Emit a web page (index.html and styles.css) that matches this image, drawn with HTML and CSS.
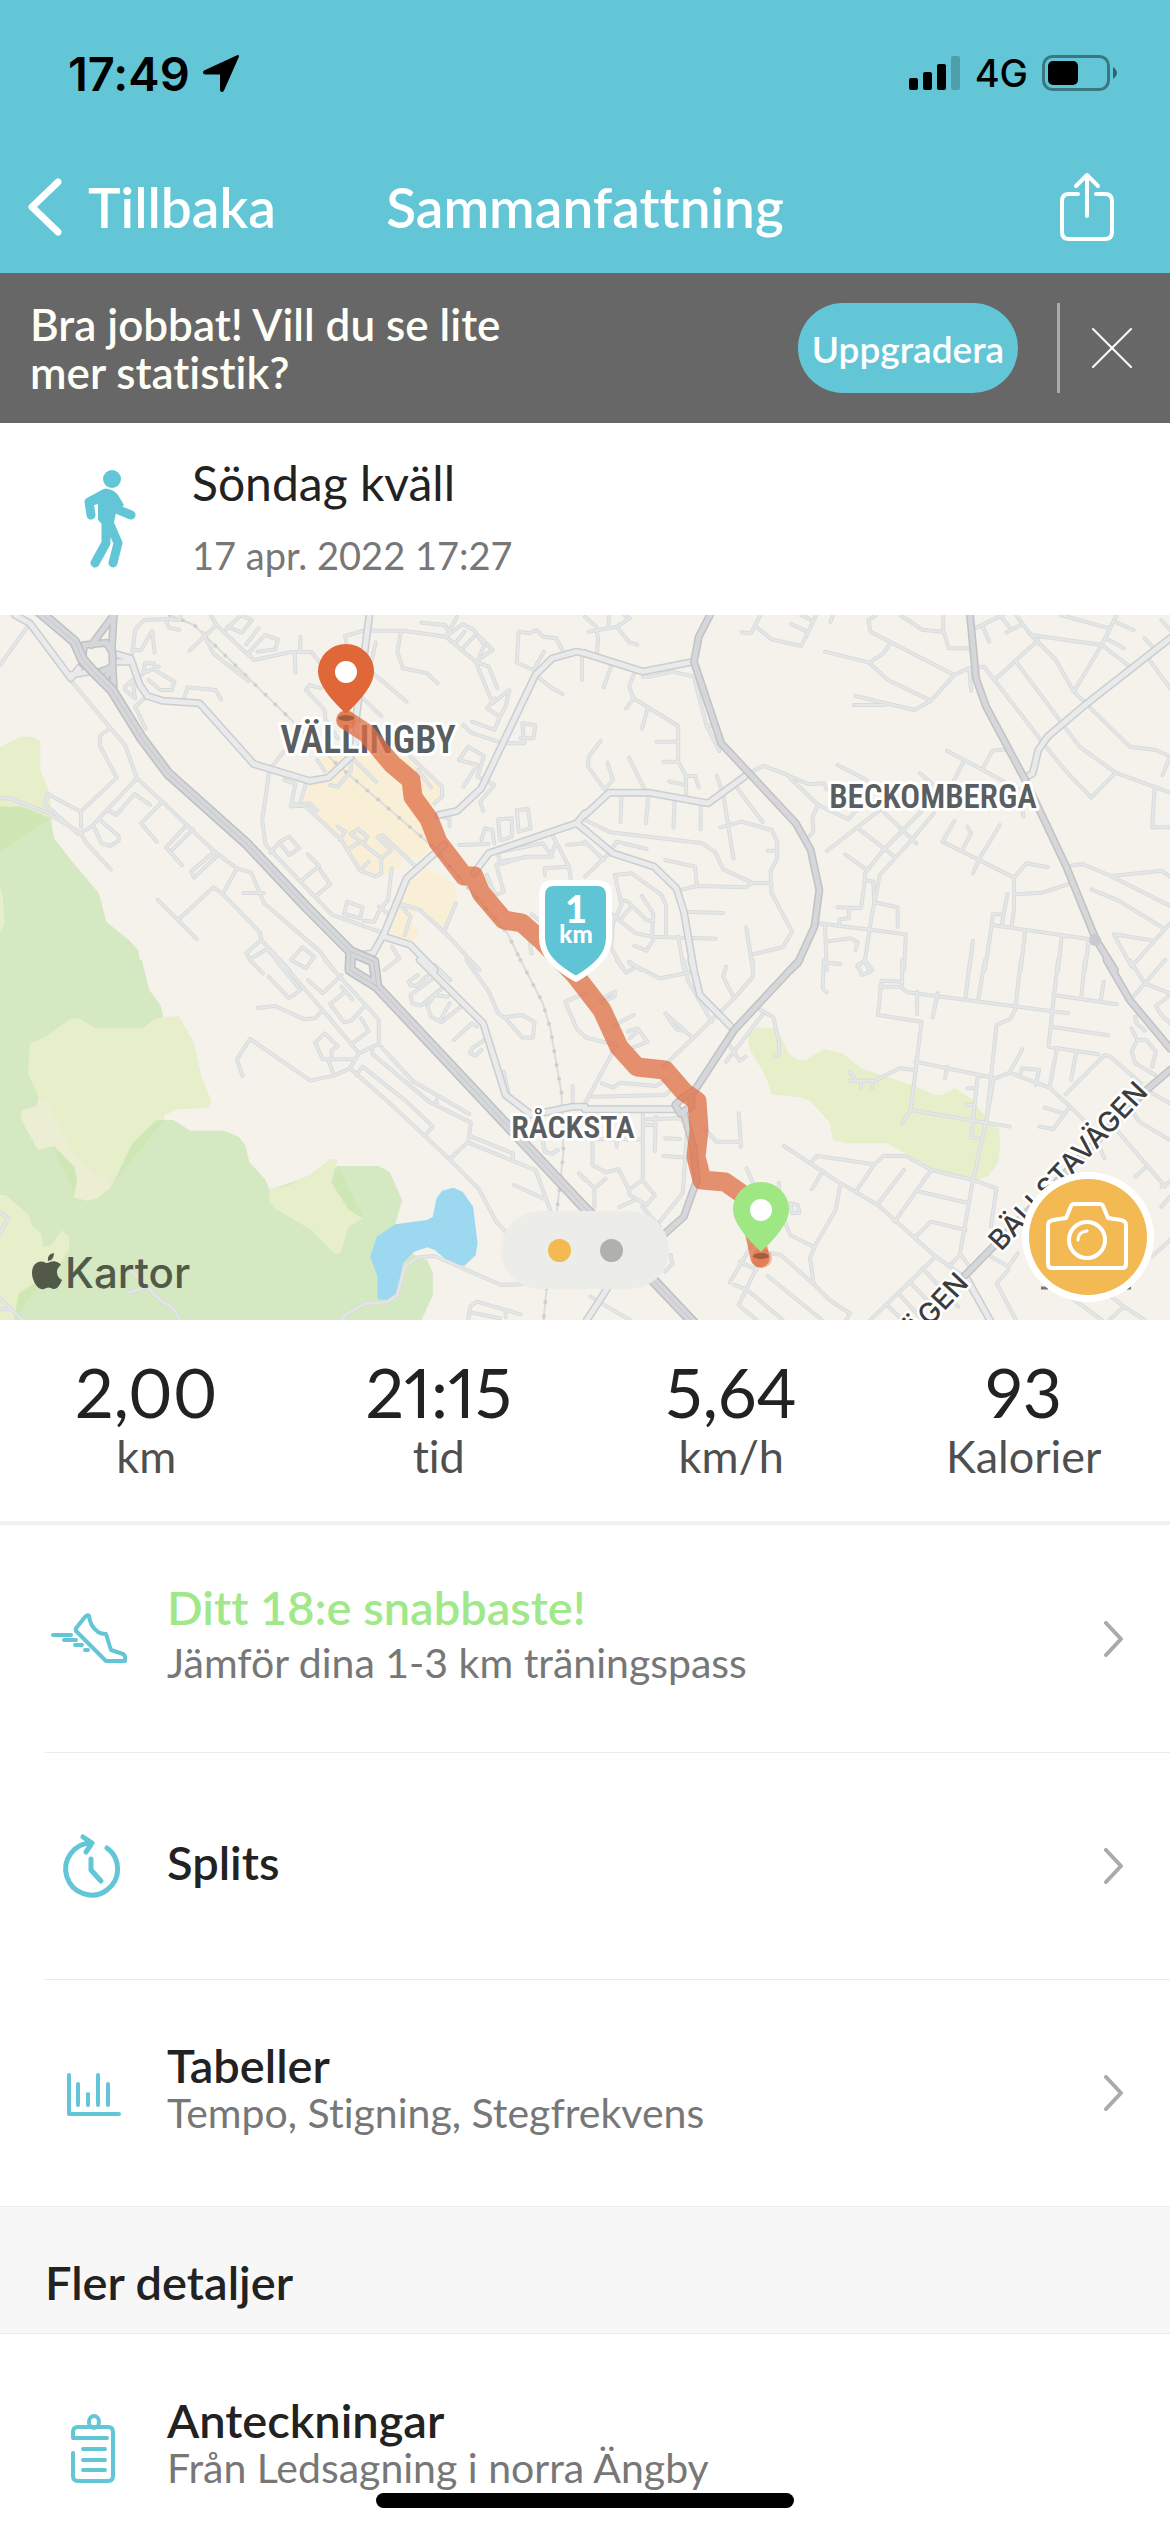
FILE: index.html
```html
<!DOCTYPE html>
<html lang="sv">
<head>
<meta charset="utf-8">
<meta name="viewport" content="width=device-width, initial-scale=1">
<title>Sammanfattning</title>
<link rel="stylesheet" href="styles.css">
</head>
<body>
<div class="screen">
  <header class="top">
    <div class="status">
      <div class="status-side">
        <span class="time">17:49</span>
        <svg width="38" height="38" viewBox="0 0 38 38" aria-hidden="true"><path d="M34.500 1.500Q38 0 36.500 3.800L22 36.500Q20 39.500 18 36.500V20.500H3Q-.5 19 2 16.500Z"/></svg>
      </div>
      <div class="status-side">
        <svg width="52" height="36" viewBox="0 0 52 36" aria-hidden="true"><rect y="23" width="9" height="12" rx="2"/><rect x="14" y="17" width="9" height="18" rx="2"/><rect x="28" y="9" width="9" height="26" rx="2"/><rect x="42" y="1" width="9" height="34" rx="2" opacity=".2"/></svg>
        <span class="network">4G</span>
        <svg width="76" height="36" viewBox="0 0 76 36" aria-hidden="true"><rect x="1.500" y="1.500" width="65" height="33" rx="9" fill="none" stroke="#000" stroke-opacity=".4" stroke-width="3"/><rect x="6" y="6" width="30" height="24" rx="5"/><path d="M71 12q8 6 0 12z" opacity=".5"/></svg>
      </div>
    </div>
    <nav class="nav">
      <a class="back" href="#">
        <svg width="34" height="58" viewBox="0 0 34 58" aria-hidden="true"><path d="M30 4L4 29L30 54" fill="none" stroke="#fff" stroke-width="7" stroke-linecap="round" stroke-linejoin="round"/></svg>
        <span>Tillbaka</span>
      </a>
      <h1>Sammanfattning</h1>
      <button class="icon-btn share" type="button" aria-label="Dela">
        <svg width="54" height="70" viewBox="0 0 54 70"><path d="M18 22H9Q2 22 2 29V60Q2 67 9 67H45Q52 67 52 60V29Q52 22 45 22H36M27 44V3M16 14L27 3L38 14" fill="none" stroke="#fff" stroke-width="4" stroke-linecap="round" stroke-linejoin="round"/></svg>
      </button>
    </nav>
  </header>

  <aside class="banner">
    <p>Bra jobbat! Vill du se lite<br>mer statistik?</p>
    <button class="upgrade" type="button">Uppgradera</button>
    <span class="divider"></span>
    <button class="icon-btn" type="button" aria-label="Stäng">
      <svg width="40" height="40" viewBox="0 0 40 40"><path d="M1 1L39 39M39 1L1 39" stroke="#fff" stroke-width="2" stroke-linecap="round"/></svg>
    </button>
  </aside>

  <section class="activity">
    <svg width="54" height="100" viewBox="84 469 54 100" aria-hidden="true"><g fill="none" stroke="#63c6d6" stroke-linecap="round" stroke-linejoin="round"><path d="M91 515L89 502L106 493L114 508L131 515" stroke-width="9"/><path d="M106 520V543L95 563M108 520L118 543L113 563" stroke-width="9"/></g><path d="M88 498L102 490Q112 487 118 495L124 505L116 513L114 522L104 526L98 520V504L91 506Z" fill="#63c6d6"/><circle cx="112" cy="479" r="9" fill="#63c6d6"/></svg>
    <div>
      <h2>Söndag kväll</h2>
      <p>17 apr. 2022 17:27</p>
    </div>
  </section>

  <section class="map" aria-label="Karta">
    <svg class="map-art" viewBox="0 615 1170 705" preserveAspectRatio="xMidYMid slice">
      <defs>
        <g id="minor">
          <path transform="translate(0 610) scale(.3731 .3333)" d="M80 40L0 165M193 215L296 354L268 377V408L313 503L217 605L128 552L120 583L210 672L243 652L367 505L335 405L296 354M0 565H25L120 605L215 668L232 700L297 778M217 605V650M367 505L435 575L575 725L635 775L673 788L708 880L855 1022L895 1080M402 585L360 552L312 615L290 600M250 645L272 700L296 708L318 692V678L265 627M435 575L378 640L420 695M497 650L445 712L488 766M517 658L463 718M575 725L512 785L520 803L580 740M635 775L597 852L572 832L477 930M423 870L527 987M597 852L697 968L700 990L660 1030L670 1048L715 1018L770 1080M700 990L775 1080M652 849H706M355 120H378L408 62L414 128M355 130L362 60L385 30L445 27L480 30L485 15M445 27L452 52L480 60M385 185L388 160H412L418 182L468 215L460 240H430L398 210M385 185H395L425 170M335 230L355 210L362 265L335 240ZL385 190M390 355L362 290L388 265M492 270L503 232L578 240L592 268M508 122L580 45L565 15M543 68L572 130L665 213M580 45L680 150L780 126H835L855 155M790 128L792 188M805 80V126M605 60L645 15L675 30L648 68L610 50M693 55L660 103M680 150L665 130L710 75L745 88L738 118L690 125M930 110L925 78L975 62H1080L1195 80L1225 20M1130 38L1193 45L1205 70M1075 62L1065 125L1080 175L1145 190L1173 220M1195 80L1275 155L1320 120L1285 80M1195 80L1240 42L1270 60L1298 105L1285 140M1220 100L1245 65M1240 115L1270 80M1275 155L1320 280L1365 240L1355 290L1340 320L1305 295L1325 265M1275 155L1310 170L1333 235M1265 335L1325 360L1340 320M1242 345L1262 368L1350 400L1405 400L1400 340L1435 345L1430 385L1395 385M1390 65L1385 158L1430 180L1458 125M1390 65L1420 70L1438 60L1455 80L1490 85L1512 130M1435 195L1480 235L1508 252M1560 130V210M1007 97L990 180L1090 275M970 262L1022 318M870 300L873 330L905 385M870 300L820 240L830 225L860 235M760 425L722 480L703 630L712 705L808 818L890 915L1030 970M762 510L792 522L780 590L830 580L850 602M820 520L805 575M782 580L820 590L915 690L965 782L1008 800L1022 790V745L940 672L960 658L985 680L975 700M1022 745L1048 720L1012 682L1025 675L1110 765M905 650L925 665L910 690M930 720L960 700M965 782L988 755M725 728L750 695L775 680L802 715L775 735L750 700M825 733L855 768L805 815M858 780L885 822L845 860M1050 775L1040 870L1015 905L1003 935L975 932M1015 890L1040 910M930 875L972 892L965 925L922 912ZM940 440V485L905 530L885 525M940 440L1008 515M850 450L870 483M1070 880L1100 920L1085 975M1070 880L1125 900L1190 965L1222 880M1190 965L1285 1080M1100 440L1185 530V560L1165 580M1120 480L1155 532M1230 705L1310 702M1290 690L1300 655L1320 660L1325 700M1340 690L1335 628L1372 625V680L1345 690M1390 665L1385 600L1415 597L1422 655L1390 665M1242 530L1280 465L1230 450L1255 410L1297 438L1280 500L1325 525L1287 575L1295 603M1480 675L1492 700L1525 770L1530 810M1345 725L1455 700L1480 740H1420L1340 755L1335 730M1410 740L1330 765L1350 845L1333 853M1490 700L1475 740M1520 705L1568 700M1525 770L1460 775V795M1305 795L1325 850M1180 620L1205 625V648M1425 913L1445 930M1420 1000L1425 1030M780 1050L810 1012L842 1040L820 1075ZM1050 1010L1070 1045L1030 1080"/>
          <path transform="translate(585 610) scale(.3731 .3333)" d="M0 20L30 50L35 85L32 135M10 65L85 50L120 25L105 15M65 15L62 50M85 50L120 98L140 104M70 170L50 232M132 190L118 228L130 265L110 296M130 265L250 348V455L270 498L272 570M168 295L153 356M192 395H250M210 455H250M270 498H295L305 532M226 515L270 525M155 200H175L235 185L292 200L325 345L360 423M325 347H340M42 393L10 440L8 470L52 538L75 510L60 458M118 443L160 540M98 555L95 636M170 555L163 640M240 575L237 653M310 580V658M440 490L477 468L520 485L600 523L640 520L648 538M550 505L625 585L705 628L728 600M625 585L610 620L612 665L595 688M677 465L755 510V540M405 530L476 636M353 497L370 550L398 746M363 652L420 635L500 660L515 695V745L497 785L500 850L555 965L530 1012L450 1033M490 722H515M432 952L450 1080M0 630L68 667L315 700L350 728L370 778L448 818L500 820M448 818L430 832L300 828L250 842M300 828L295 770L215 750M165 717L85 695L65 730L0 800M0 695L50 750M80 795L125 790L205 855L217 885V980M80 795L98 885L75 940L70 1015L105 1080M98 870L115 875L165 930L183 935M152 858L183 910L180 978M70 910L135 970L180 980L350 986M98 925L120 895M132 1008L165 1022L185 985M270 905L370 909M250 980L265 1080M118 1055L150 1080M420 67L445 70L470 15M458 50L500 88L580 108L620 15M553 42L595 65M580 15L610 32M665 15L658 35M780 15L760 30L765 65L990 195L927 272L812 210L762 158L643 125M762 158L800 130L820 98M927 272L883 300L725 258M720 285H805M990 195L1027 175L1070 170L1225 395L1290 485L1357 563L1422 488L1568 548M845 15L905 60L960 65V15M960 60L975 115H1035M1030 175L1035 243M1045 55L1120 15M1065 45L1083 95M1115 20L1138 52M1155 15L1195 75L1385 105L1460 170M1130 67L1168 45M1215 90L1100 207M1155 155L1325 410L1422 488M1195 75L1262 150L1310 245L1385 105L1425 15M1310 245L1460 410L1530 420L1568 440L1548 495M1275 15L1405 55M1420 35L1470 60M1395 85L1445 115M1510 145L1568 235M1500 85L1520 110M1545 30L1568 60M970 422L1165 540L1175 620M1015 455L975 540M1065 478L1092 422L1130 418M898 490L940 530M1527 530L1520 652H1568M648 723L790 600L875 520M790 595L888 700M728 652L830 740M935 610L875 690L790 795L770 910L750 1050L770 1080M697 733L755 780M905 600L800 720L750 790V810L740 895L677 892M750 810L773 815L775 877L838 892V950M707 895V925L682 928V945M625 940L860 973L855 1080M643 945L648 1080M648 995L712 985L730 997L725 1020M650 1058L683 1062M750 1050L730 1070M990 633L958 695L1150 803L1183 760L1240 772M1025 650L1035 670L1010 722M1112 645L1055 750L1040 790M1150 803V900L1143 950M1150 853L1225 848L1297 822M1132 852L1117 945M1120 913H1093L1090 945L1368 990M1090 945L1072 1080M1040 992L1030 1080M1180 960L1168 1080M1278 975L1268 1080M1350 990L1340 1080M1303 767L1333 762L1410 798L1568 888M1410 798L1545 782L1568 800M1357 838L1430 872L1555 958M1568 940L1465 1070L1417 973L1525 992"/>
          <path transform="translate(0 960) scale(.3731 .3333)" d="M670 0L705 40M720 50L775 115L805 90L740 0M750 0L865 150L962 280L1015 252V180L980 135L870 0M825 60L865 100L915 45M915 80L945 118M925 95L885 132L922 187L942 182L980 135M968 175L988 213L945 250M865 150L845 175L815 178L738 138L690 144M962 280L938 325L895 347L832 362L670 237L635 298L650 348M950 298H865L845 248L870 220L905 258L888 272L890 297M880 300L895 347M938 325L1040 425L1205 598L1282 685L1330 785L1360 820M955 345L972 320L1090 425L1160 500L1140 525M1015 252L1105 362L1258 462M998 262V282L1150 425L1262 488L1255 545L1205 598M1170 420V438M1258 528L1375 580V600M1255 548L1435 630L1475 750M1378 675L1465 720M1165 15L1207 60M1250 0L1310 95L1335 160L1350 172L1400 165L1433 187L1428 233H1400L1355 175M1120 45L1095 65L1100 75L1115 78L1145 48M1155 60L1100 105L1105 130L1128 137L1190 80M1200 110L1165 105L1145 135L1155 170L1183 187L1235 140M1180 180L1205 130M1217 240L1265 190L1278 200M1298 240L1265 265L1260 280L1275 287L1290 270M1350 335L1362 395M1535 378V435M1568 100L1515 125L1545 205L1568 230M1455 545L1460 575L1478 582L1495 570M1552 640L1568 660M0 755L22 775L0 820M0 1015L60 1080M0 1048H25M350 930L433 1025L463 1043L483 1080M345 998L395 980M915 1080L925 1065L977 1032L1037 1027L1065 1005L1085 920L1120 892L1165 888L1343 975L1400 972M1255 1080L1260 1040L1278 1025L1395 1063M1265 1058L1340 1075M1355 1055V1072"/>
          <path transform="translate(585 960) scale(.3731 .3333)" d="M85 0L110 38L130 25M118 8L200 55L285 37M265 0L275 60L340 185M378 20L370 50L400 115L450 50V0M80 95V108L45 130M80 95L40 120M290 235L215 160L245 208L260 212M470 150L505 172L520 250V283L510 288M475 165L378 305M390 260L415 303L430 290M130 165L80 195M115 215L140 205L168 245L130 262M145 210L120 235M0 232L85 255L0 430M45 370L75 383L95 368L190 378L215 360M20 410L215 405L225 395M210 320L400 115M640 0L637 85L648 97M645 8L683 12M730 15L750 5L765 35L742 45ZM1032 0L1020 110M1072 0L1053 125M1168 0L1153 150L1138 178L1103 195L1075 490M1268 0L1242 260L1375 283M1340 0L1330 112M1390 65L1382 125M1255 105L1425 133M850 0V85L865 97L1295 160M850 65L795 62L785 165L902 185L873 450L850 490M790 80H850M890 95V162M945 100L932 172M1248 200L1403 226M885 305L1100 355L1138 338L1245 383L1300 440L1355 500L1392 595M970 320L965 355M1138 338L1172 268M1165 345L1172 325L1217 330L1208 375M885 330L843 325L778 362H710M710 335L725 360M740 362V383M770 362V383M873 450L1138 500M1053 345L1035 533H1053M1025 385H1045M1023 435H1040M1095 360L1075 485L1040 660L1005 880L1030 920M1265 265L1245 383M1317 272L1303 360M1288 403L1392 285L1408 290L1490 370M1232 443L1282 460M1300 440L1255 507L1218 500M1465 205L1480 240H1505L1530 275L1520 320M1480 240L1465 275L1475 310L1528 345M1460 0L1500 70L1568 100M1555 0L1465 115M1568 105L1530 138L1545 165L1568 190M1475 170L1478 190L1500 212M1505 390L1568 430M1460 440L1485 485L1568 540M1425 510L1555 680M1475 650L1500 625M1545 680L1568 665M533 558L685 670L785 735L940 890L1010 945M608 605L622 588L775 613L725 697M775 613L800 588H860L928 630L1040 660L1103 685L1088 800M638 632L608 688M855 630L783 735M928 630L830 785M890 693L1030 730M885 832L927 785L1020 810M433 625L450 670M685 670L672 750L615 860L603 895L613 970M520 668V740L550 825L615 862M550 730L570 735L575 758L555 760ZM500 880L525 885L615 975L655 1020L710 1060L700 1080M490 948L635 1080M400 975L435 990L530 1080M470 900L412 1035L460 1080M450 850L388 968M415 905L460 930M412 460L418 560M418 545H352L320 505M155 455V660M190 470L187 573M155 495H190M165 478L250 475L275 490L262 700L200 785M215 535L255 537M210 588L260 592M85 535V560M20 545V615L55 637L90 628L118 690M20 538H150M0 655L25 685V740M25 685L55 657M153 660L187 705L165 735L120 705L118 690ZM92 742L130 722M153 740L200 800M215 935L235 910L230 885M15 1010L120 1080M940 890L765 1080M905 925L1000 1040M870 965L950 1060M840 1000L905 1080M810 1035L850 1080M975 920L1005 885M1088 890L1135 920L1160 880M1135 930L1103 970L1155 1080M1300 1010L1385 1080M1410 1010L1445 1040L1405 1080M1445 1040L1500 1080M1520 890L1568 840M1545 740L1568 710"/>
        </g>
        <g id="medium">
          <path transform="translate(0 610) scale(.3731 .3333)" d="M40 15L80 40L190 205L215 170M190 195L240 185M305 130L350 145L375 225L395 258L435 272L535 280L680 462L830 513L880 503L940 440L955 395V320L990 15M310 155H350M1175 615L1225 603L1290 535L1435 195L1480 145L1545 125L1568 130M1270 790L1310 730L1545 640L1568 610M1545 640L1568 660M1190 705L1090 805L1030 970L1000 1030L960 1035M1030 980L1100 1005L1165 1080"/>
          <path transform="translate(585 610) scale(.3731 .3333)" d="M0 130L155 185L292 155M0 615L65 548H170L330 580L440 490M0 660L75 730L185 770L245 835L265 905L292 1080M1568 85L1340 285L1240 380L1215 420L1200 490L1185 500"/>
          <path transform="translate(0 960) scale(.3731 .3333)" d="M1125 0L1295 190L1355 405L1425 465L1535 440H1568"/>
          <path transform="translate(585 960) scale(.3731 .3333)" d="M0 448H240M285 0L308 105L400 210M1018 945L1085 1080M5 1080L60 985"/>
        </g>
        <g id="major">
          <path transform="translate(585 610) scale(.3731 .3333)" d="M335 15L305 80L292 155L365 400L440 490L565 640L605 720L628 840L615 950L570 1060L550 1080M1032 15L1048 205L1075 290L1180 510L1290 770L1370 990L1420 1080"/>
          <path transform="translate(585 960) scale(.3731 .3333)" d="M575 0L400 210L295 390L265 410L242 435L255 460L285 440L285 410M265 460L290 560L300 660L265 770L215 820M1398 0L1460 120L1568 265M1568 330L1505 390L1020 945M180 950L260 1050"/>
          <path transform="translate(0 610) scale(.3731 .3333)" d="M305 15L300 110L305 240M305 15L245 105M225 105L285 98L302 130V170L260 190L220 160ZM295 175L255 190M300 180L275 210"/>
        </g>
        <g id="motorway">
          <path transform="translate(0 610) scale(.3731 .3333)" d="M100 0L200 95L222 150L250 185L300 240L380 385L450 490L660 700L820 890L940 1025L938 1080L1010 1130L1002 1055L940 1025"/>
          <path transform="translate(0 960) scale(.3731 .3333)" d="M1000 68L1568 745L1620 800L1750 960L1860 1090"/>
        </g>
        <g id="rail">
          <path transform="translate(0 610) scale(.3731 .3333)" d="M455 15L520 45L900 460L1160 710L1360 970L1395 1050"/>
          <path transform="translate(0 960) scale(.3731 .3333)" d="M1395 0L1455 130L1475 205L1505 400L1510 580L1493 750M1465 985L1457 1080"/>
        </g>
      </defs>
      <rect y="610" width="1170" height="715" fill="#f4f2eb"/>
      <g transform="translate(0 610) scale(.3731 .3333)">
        <path fill="#e6eeca" d="M0 412L55 380H85L108 395V480L133 550L140 640H0Z"/>
        <path fill="#d4e8c1" d="M0 590H60L135 625L145 685L190 750L265 850L285 935L345 990L370 1020L380 1080H0Z"/>
        <path fill="#cfe6b5" d="M0 590H60L135 625L0 725Z"/>
        <path fill="#e6eeca" d="M0 830L8 860L12 940L0 970Z"/>
        <path fill="#f9efd7" d="M845 450L900 430L940 385L1100 440L1180 520V565L1160 600L1170 700L1130 745L1075 740V775L1000 800L960 770L905 680L810 580L830 520L880 505ZM1130 765L1215 820L1225 860L1195 960L1120 900L1100 935L1125 970L1105 995L1045 975L1085 840Z"/>
      </g>
      <g transform="translate(0 960) scale(.3731 .3333)">
        <path fill="#d4e8c1" d="M0 0H380L400 90L430 135L438 170L300 300L440 480H465L510 512H600L640 530L657 555L668 605L712 660L722 690L905 618H1015L1045 637L1078 720L1060 790L1100 880L1145 900L1160 940V1005L1130 1080H0Z"/>
        <path fill="#cfe6b5" d="M905 618L975 775L935 750L887 680ZM440 480L310 660L355 550L415 485ZM140 555L200 700L207 662L200 620ZM38 1080L150 900L50 1000Z"/>
        <path fill="#e6eeca" d="M80 250L120 232L190 175H210L255 203H385L415 175L480 168L520 250L540 350L567 425L555 445L480 447L440 465V480H420L355 550L298 680L262 715L235 722L198 712L207 662L200 620L145 558L102 570L55 475L60 450L100 438L103 410L75 340ZM722 685L765 680L832 643L885 597H905L887 665L935 750L972 775L935 800L912 880H895L832 808L735 745L722 725ZM0 705L15 705L78 765L85 795L110 820L117 862L135 858L165 810L185 830V870L150 930L50 1000L38 1080H0Z"/>
        <path fill="#ebeed3" d="M103 415H120L190 570L260 650L295 655V685L262 715L235 722L198 712L207 662L200 620L145 558L102 570L55 475L60 450L100 438Z"/>
        <path fill="#9cd8f0" d="M1215 683L1185 692L1170 715L1160 770L1145 780L1060 793L1010 830L992 890L1012 950V1018L1040 1020L1065 1005L1080 910L1110 875L1145 862L1165 870L1210 912L1245 917L1275 885L1280 850L1268 740L1240 695Z"/>
      </g>
      <path transform="translate(585 960) scale(.3731 .3333)" fill="#e6eeca" d="M437 225L460 203L515 205L545 280L570 300H590L640 268L690 280L740 325L890 380L935 405H955L990 385L1035 415L1080 480L1110 505L1113 555L1108 605L1080 650L1050 658L970 650L810 550H700L665 540L655 485L600 420L575 412L500 403L485 350L440 265Z"/>
      <use href="#rail" class="rail"/>
      <use href="#rail" class="rail-ticks"/>
      <use href="#minor" class="minor-edge"/>
      <use href="#minor" class="minor"/>
      <use href="#medium" class="medium-edge"/>
      <use href="#medium" class="medium"/>
      <use href="#major" class="major-edge"/>
      <use href="#major" class="major"/>
      <use href="#motorway" class="motorway-edge"/>
      <use href="#motorway" class="motorway"/>
      <use href="#motorway" class="median"/>
      <circle cx="1095" cy="940" r="6" fill="#c9cacd"/>

      <g class="place">
        <text x="368" y="753" font-size="38">VÄLLINGBY</text>
        <text x="933" y="808" font-size="33">BECKOMBERGA</text>
        <text x="573" y="1138" font-size="32">RÅCKSTA</text>
      </g>
      <g class="street">
        <text transform="translate(1001 1252) rotate(-47)">BÄLLSTAVÄGEN</text>
        <text transform="translate(970 1284) rotate(-47)" text-anchor="end">BÄLLSTAVÄGEN</text>
      </g>
      <path d="M1041 1288H1048M1127 1288H1131" stroke="#777" stroke-width="3"/>

      <path class="route" d="M346 720L366 733L392 764L411 780L413 797L429 819L438 842L464 876L474 876L481 893L504 920L522 923L541 940L575 975L602 1010L619 1047L637 1067L665 1070L684 1092L697 1101L699 1130L696 1157L702 1180L725 1182L745 1196L755 1235L760 1258"/>
      <circle cx="346" cy="720" r="10" fill="#e0683a" opacity=".4"/>
      <circle cx="762" cy="1258" r="10" fill="#e0683a" opacity=".4"/>
      <ellipse cx="346" cy="718" rx="8" ry="3" fill="#7a4630" opacity=".6"/>
      <ellipse cx="761" cy="1256" rx="8" ry="3" fill="#7a4630" opacity=".6"/>
      <path fill="#e06737" d="M346 714C333 701 318 686 318 671A28 27 0 0 1 374 671C374 686 359 701 346 714Z"/>
      <circle cx="346" cy="672" r="11" fill="#fff"/>
      <path fill="#9fe783" d="M761 1252C748 1239 733 1224 733 1209A28 27 0 0 1 789 1209C789 1224 774 1239 761 1252Z"/>
      <circle cx="761" cy="1210" r="11" fill="#fff"/>
      <path fill="#5fc5d5" stroke="#fff" stroke-width="6" stroke-linejoin="round" d="M554 883H597Q609 883 609 895V938C609 955 596 967 576 979C555 967 542 955 542 938V895Q542 883 554 883Z"/>
      <text class="badge"><tspan x="576" y="923" font-size="38">1</tspan><tspan x="576" y="943" font-size="24">km</tspan></text>
      <g fill="#3b4134" opacity=".85">
        <path d="M48 1261Q47 1254 54 1253Q54 1260 48 1261ZM46 1263C50 1263 52 1260 57 1262Q60 1263 61 1265C55 1269 56 1277 62 1280Q58 1290 53 1289C50 1287 47 1287 44 1289C38 1291 32 1281 32 1273C32 1264 39 1259 46 1263Z"/>
        <text class="brand" x="65" y="1288">Kartor</text>
      </g>
    </svg>
    <div class="pager"><span class="dot current"></span><span class="dot"></span></div>
    <button class="camera" type="button" aria-label="Lägg till foto">
      <svg width="84" height="70" viewBox="0 0 84 70"><g fill="none" stroke="#fff" stroke-width="4" stroke-linejoin="round"><path d="M7 18L20 16L25 4Q26 2 28 2H54Q56 2 57 4L62 16L75 18Q80 19 80 23V62Q80 66 76 66H6Q2 66 2 62V23Q2 19 7 18Z"/><circle cx="41" cy="38" r="18"/><path d="M32 38Q32 30 41 29" stroke-width="3" stroke-linecap="round"/></g></svg>
    </button>
  </section>

  <dl class="stats">
    <div><dt>km</dt><dd>2,00</dd></div>
    <div><dt>tid</dt><dd>21:15</dd></div>
    <div><dt>km/h</dt><dd>5,64</dd></div>
    <div><dt>Kalorier</dt><dd>93</dd></div>
  </dl>

  <main>
    <a class="row" href="#">
      <svg class="row-icon" viewBox="0 0 90 76" aria-hidden="true"><path d="M44 15Q45 25 53 31Q56 33 61 33L66 49L78 53Q81 55 80 60H61L31 30Q30 28 32 26L40 16Q43 13 44 15ZM8 34H26M19 39H31M30 44H37M40 49H43"/></svg>
      <span class="row-text spaced"><strong class="best">Ditt 18:e snabbaste!</strong><small>Jämför dina 1-3 km träningspass</small></span>
      <svg class="chevron" viewBox="0 0 20 36" aria-hidden="true"><path d="M2 2L17 18L2 34"/></svg>
    </a>
    <a class="row" href="#">
      <svg class="row-icon bold" viewBox="0 0 90 76" aria-hidden="true"><path d="M62 20A26 26 0 1 1 47 15M38 9L47 15L41 24M46 31V42L56 53"/></svg>
      <span class="row-text"><strong>Splits</strong></span>
      <svg class="chevron" viewBox="0 0 20 36" aria-hidden="true"><path d="M2 2L17 18L2 34"/></svg>
    </a>
    <a class="row" href="#">
      <svg class="row-icon" viewBox="0 0 90 76" aria-hidden="true"><path d="M24 20V59H74M33 29V50M43 39V50M53 20V50M63 29V50"/></svg>
      <span class="row-text"><strong>Tabeller</strong><small>Tempo, Stigning, Stegfrekvens</small></span>
      <svg class="chevron" viewBox="0 0 20 36" aria-hidden="true"><path d="M2 2L17 18L2 34"/></svg>
    </a>
    <h3 class="section">Fler detaljer</h3>
    <a class="row" href="#">
      <svg class="row-icon" viewBox="0 0 90 76" aria-hidden="true"><path d="M62 28H28V22Q28 17 33 17H63Q68 17 68 22V66Q68 71 63 71H33Q28 71 28 66V43M38 39H60M38 50H60M38 60H60"/><ellipse cx="49" cy="12" rx="5" ry="6"/></svg>
      <span class="row-text"><strong>Anteckningar</strong><small>Från Ledsagning i norra Ängby</small></span>
    </a>
  </main>
  <div class="home-bar"></div>
</div>
</body>
</html>
```
FILE: styles.css
```css
* { box-sizing: border-box; margin: 0; padding: 0; }
body { background: #fff; color: #222; font-family: Lato, "Open Sans", sans-serif; font-variant-ligatures: none; }
a { color: inherit; text-decoration: none; }
button { border: 0; background: none; font: inherit; color: inherit; cursor: pointer; }
svg { display: block; flex: none; }

.screen { position: relative; height: 100vh; overflow: hidden; }

.top { background: #63c6d6; }
.status { display: flex; justify-content: space-between; height: 140px; padding: 8px 52px 0 68px; }
.status-side { display: flex; align-items: center; gap: 14px; height: 130px; font-family: Inter, "Liberation Sans", sans-serif; color: #000; }
.time { font-size: 47px; font-weight: 600; }
.status-side:first-child { gap: 12px; }
.network { font-size: 38px; font-weight: 500; }
.nav { display: grid; grid-template-columns: 1fr auto 1fr; align-items: center; height: 133px; padding: 0 28px; color: #fff; }
.back { display: flex; align-items: center; gap: 26px; }
.nav span, .nav h1 { font-size: 55px; line-height: 64px; font-weight: 600; }
.share { justify-self: end; margin-right: 28px; }
.icon-btn { display: block; }

.banner { display: flex; align-items: center; height: 150px; padding: 0 38px 0 30px; background: #676767; color: #fffff6; }
.banner p { flex: 1; font-size: 44px; line-height: 48px; font-weight: 600; }
.upgrade { width: 220px; height: 90px; border-radius: 45px; background: #63c6d6; color: #fff; font-size: 37px; font-weight: 600; }
.divider { width: 3px; height: 90px; margin: 0 32px 0 39px; background: #aaa; }

.activity { display: flex; align-items: center; gap: 54px; height: 192px; padding-left: 84px; }
.activity h2 { font-size: 48px; line-height: 60px; font-weight: 400; }
.activity p { margin-top: 12px; font-size: 38px; line-height: 60px; color: #777; }

.map { position: relative; }
.map-art { width: 100%; height: auto; }
.map-art path { vector-effect: non-scaling-stroke; }
.map-art use { fill: none; stroke-linejoin: round; stroke-linecap: round; }
.rail { stroke: #dcdcda; stroke-width: 2; }
.rail-ticks { stroke: #cfcfcd; stroke-width: 4; stroke-dasharray: 0 14; }
.minor-edge { stroke: #d9dcdd; stroke-width: 4; }
.minor { stroke: #e5e7e7; stroke-width: 2; }
.medium-edge { stroke: #cccdcf; stroke-width: 8; }
.medium { stroke: #e8eaec; stroke-width: 5; }
.major-edge { stroke: #c2c2c4; stroke-width: 8; }
.major { stroke: #d6d7db; stroke-width: 5; }
.motorway-edge { stroke: #bebfc1; stroke-width: 11; }
.motorway { stroke: #d6d7db; stroke-width: 8; }
.median { stroke: #c6c7ca; stroke-width: 1; }
.route { fill: none; stroke: #df6e43; stroke-opacity: .75; stroke-width: 19; stroke-linejoin: round; stroke-linecap: round; }
.place text { font-family: "Liberation Sans Narrow", "Roboto Condensed", Roboto, sans-serif; font-weight: 600; text-anchor: middle; fill: #5a5e60; stroke: #fff; stroke-width: 6; stroke-linejoin: round; paint-order: stroke; }
.street text { font: 500 28px Inter, "Liberation Sans", sans-serif; fill: #3c3c3c; stroke: #fff; stroke-width: 5; stroke-linejoin: round; paint-order: stroke; }
.badge { font-weight: 900; fill: #fff; text-anchor: middle; }
.brand { font: 500 42px Inter, "Liberation Sans", sans-serif; }
.pager { position: absolute; left: 50%; bottom: 31px; display: flex; align-items: center; justify-content: center; gap: 29px; width: 168px; height: 78px; margin-left: -84px; border-radius: 39px; background: #ecece9; }
.dot { width: 23px; height: 23px; border-radius: 50%; background: #b0b0ad; }
.dot.current { background: #f3b952; }
.camera { position: absolute; right: 16px; bottom: 18px; display: grid; place-items: center; width: 132px; height: 130px; border: 7px solid #fff; border-radius: 50%; background: #f3b952; }

.stats { display: grid; grid-template-columns: repeat(4, 1fr); height: 205px; padding-top: 32px; border-bottom: 4px solid #f0f0f5; text-align: center; }
.stats div { display: flex; flex-direction: column-reverse; justify-content: flex-end; }
.stats dd { font-size: 68px; line-height: 80px; font-variant-numeric: proportional-nums; }
.stats dt { font-size: 45px; line-height: 48px; color: #4f4f4f; }

.row { display: flex; align-items: center; position: relative; min-height: 227px; padding: 0 46px 0 45px; }
.row + .row::before { content: ""; position: absolute; top: 0; left: 45px; right: 0; border-top: 1px solid #ebebeb; }
.row-icon { width: 90px; height: 76px; }
.row-icon, .chevron { fill: none; stroke: #63c6d6; stroke-width: 4; stroke-linecap: round; stroke-linejoin: round; }
.row-text { display: flex; flex-direction: column; flex: 1; padding: 0 0 8px 32px; }
.row-text.spaced { gap: 8px; }
.row strong { font-size: 47px; line-height: 48px; font-weight: 600; }
.row small { font-size: 41px; line-height: 48px; color: #777; }
.row .best { color: #a0e889; }
.row-icon.bold { stroke-width: 5; }
.chevron { width: 20px; height: 36px; stroke: #aaa; }
.section { height: 128px; padding: 48px 45px 0; border-top: 1px solid #ebebeb; border-bottom: 1px solid #ebebeb; background: #f7f7f7; font-size: 47px; line-height: 54px; font-weight: 600; }
.home-bar { position: absolute; bottom: 24px; left: 50%; width: 418px; height: 15px; margin-left: -209px; border-radius: 8px; background: #000; }
```
